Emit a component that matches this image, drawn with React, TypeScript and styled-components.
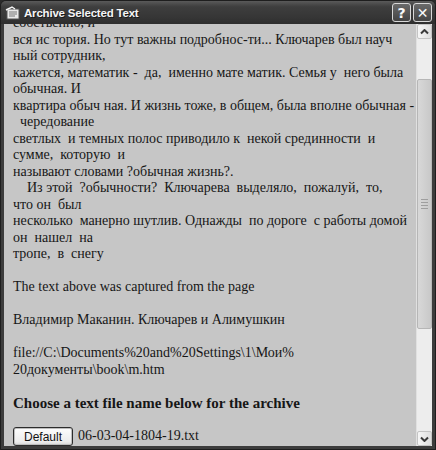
import { useEffect, useRef } from 'react';
import styled, { createGlobalStyle } from 'styled-components';

// окно "Archive Selected Text" в стиле Windows XP (оттенки серого)

const GlobalStyle = createGlobalStyle`
  html, body {
    margin: 0;
    padding: 0;
    background: #2a2a2a;
  }
  #root {
    width: 436px;
    height: 450px;
  }
`;

const Window = styled.div`
  width: 436px;
  height: 450px;
  box-sizing: border-box;
  display: flex;
  flex-direction: column;
  background: #3c3c3c;
  border: 1px solid #1e1e1e;
  border-radius: 6px 6px 0 0;
  overflow: hidden;
`;

const TitleBar = styled.div`
  height: 23px;
  flex: none;
  display: flex;
  align-items: center;
  padding: 0 3px 0 4px;
  background: linear-gradient(#5a5a5a 0%, #3e3e3e 25%, #363636 70%, #2e2e2e 100%);
`;

const TitleText = styled.span`
  flex: 1;
  margin-left: 3px;
  color: #f4f4f4;
  font-family: 'Liberation Sans', Arial, sans-serif;
  font-weight: bold;
  font-size: 11.5px;
  letter-spacing: -0.2px;
  text-shadow: 1px 1px 0 #1a1a1a;
`;

const TitleButtons = styled.div`
  display: flex;
  gap: 2px;
`;

const TitleButton = styled.div`
  width: 19px;
  height: 19px;
  box-sizing: border-box;
  border: 1px solid #d8d8d8;
  border-radius: 3px;
  background: linear-gradient(#6a6a6a, #444);
  display: flex;
  align-items: center;
  justify-content: center;
  color: #fafafa;
  font-family: 'DejaVu Sans', sans-serif;
  font-weight: bold;
  font-size: 14px;
  line-height: 1;
`;

const Frame = styled.div`
  flex: 1;
  display: flex;
  padding: 0 3px 3px 3px;
  min-height: 0;
`;

const Content = styled.div`
  flex: 1;
  background: #c6c6c6;
  overflow: hidden;
  padding: 0 8px 0 9px;
  font-family: 'Liberation Serif', 'Times New Roman', serif;
  font-size: 14px;
  line-height: 16.5px;
  color: #161616;
`;

const Para = styled.div`
  white-space: pre;
`;

const Gap = styled.div`
  height: 16.5px;
`;

const Heading = styled.div`
  font-weight: bold;
  font-size: 15px;
  line-height: 18px;
  margin: 16px 0 15px;
`;

const FileRow = styled.div`
  display: flex;
  align-items: center;
  gap: 5px;
`;

const DefaultButton = styled.button`
  width: 60px;
  height: 19px;
  padding: 0;
  box-sizing: border-box;
  border: 1px solid #2c2c2c;
  border-radius: 3px;
  background: linear-gradient(#fdfdfd, #ececec 80%, #d6d6d6);
  box-shadow: inset 0 0 0 1px #bdbdbd;
  font-family: 'Liberation Sans', Arial, sans-serif;
  font-size: 12px;
  color: #111;
`;

const Scrollbar = styled.div`
  width: 15px;
  flex: none;
  display: flex;
  flex-direction: column;
  background: #ededed;
  border-left: 1px solid #e0e0e0;
`;

const ArrowButton = styled.div`
  height: 15px;
  flex: none;
  box-sizing: border-box;
  border: 1px solid #c4c4c4;
  border-radius: 2px;
  background: linear-gradient(90deg, #f6f6f6, #dedede);
  display: flex;
  align-items: center;
  justify-content: center;
`;

const Track = styled.div`
  flex: 1;
  display: flex;
  flex-direction: column;
`;

const Thumb = styled.div`
  margin-top: 40px;
  height: 250px;
  box-sizing: border-box;
  border: 1px solid #b6b6b6;
  border-radius: 2px;
  background: linear-gradient(90deg, #d8d8d8, #c8c8c8);
  display: flex;
  flex-direction: column;
  align-items: center;
  justify-content: center;
  gap: 2px;
`;

const Grip = styled.div`
  width: 7px;
  height: 1px;
  background: #9e9e9e;
`;

const Chevron = ({ down }: { down?: boolean }) => (
  <svg width="9" height="6" viewBox="0 0 9 6">
    <path
      d={down ? 'M1 1.5 L4.5 5 L8 1.5' : 'M1 4.5 L4.5 1 L8 4.5'}
      stroke="#3a3a3a"
      strokeWidth="2"
      fill="none"
    />
  </svg>
);

const AppIcon = () => (
  <svg width="16" height="14" viewBox="0 0 16 14">
    <rect x="2" y="3" width="12" height="10" fill="#e8e8e8" stroke="#555" />
    <path d="M4 6 H12 M4 8 H12 M4 10 H10" stroke="#777" />
    <path d="M1 4 L7 1 L10 3" stroke="#f2f2f2" strokeWidth="1.5" fill="none" />
  </svg>
);

const lines = [
  'собственно, и',
  'вся ис тория. Но тут важны подробнос-ти... Ключарев был науч',
  'ный сотрудник,',
  'кажется, математик -  да,  именно мате матик. Семья у  него была',
  'обычная. И',
  'квартира обыч ная. И жизнь тоже, в общем, была вполне обычная -',
  '  чередование',
  'светлых  и темных полос приводило к  некой срединности  и',
  'сумме,  которую  и',
  'называют словами ?обычная жизнь?.',
  '    Из этой  ?обычности?  Ключарева  выделяло,  пожалуй,  то,',
  'что он  был',
  'несколько  манерно шутлив. Однажды  по дороге  с работы домой',
  'он  нашел  на',
  'тропе,  в  снегу',
];

export default function App() {
  const ref = useRef<HTMLDivElement>(null);

  useEffect(() => {
    if (ref.current) ref.current.scrollTop = 16;
  }, []);

  return (
    <>
      <GlobalStyle />
      <Window>
        <TitleBar>
          <AppIcon />
          <TitleText>Archive Selected Text</TitleText>
          <TitleButtons>
            <TitleButton>?</TitleButton>
            <TitleButton>✕</TitleButton>
          </TitleButtons>
        </TitleBar>
        <Frame>
          <Content ref={ref}>
            {lines.map((l, i) => (
              <Para key={i}>{l}</Para>
            ))}
            <Gap />
            <Para>The text above was captured from the page</Para>
            <Gap />
            <Para>Владимир Маканин. Ключарев и Алимушкин</Para>
            <Gap />
            <Para>file://C:\Documents%20and%20Settings\1\Мои%</Para>
            <Para>20документы\book\m.htm</Para>
            <Heading>Choose a text file name below for the archive</Heading>
            <FileRow>
              <DefaultButton>Default</DefaultButton>
              <span>06-03-04-1804-19.txt</span>
            </FileRow>
          </Content>
          <Scrollbar>
            <ArrowButton>
              <Chevron />
            </ArrowButton>
            <Track>
              <Thumb>
                <Grip />
                <Grip />
                <Grip />
                <Grip />
              </Thumb>
            </Track>
            <ArrowButton>
              <Chevron down />
            </ArrowButton>
          </Scrollbar>
        </Frame>
      </Window>
    </>
  );
}
